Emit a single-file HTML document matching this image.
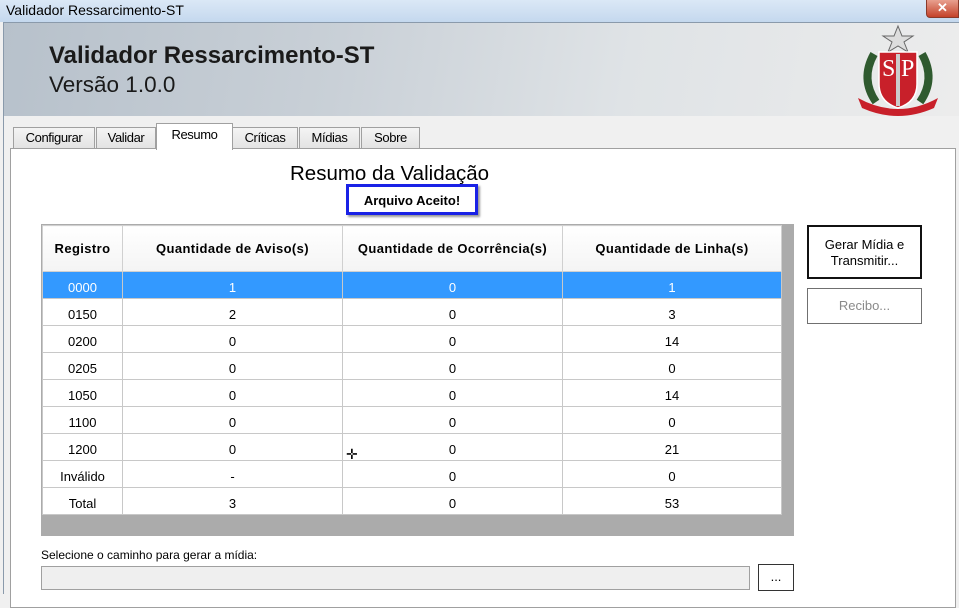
<!DOCTYPE html>
<html><head><meta charset="utf-8"><style>
*{margin:0;padding:0;box-sizing:border-box}
body{width:959px;height:594px;overflow:hidden;background:#f0f0f0;font-family:"Liberation Sans",sans-serif;position:relative;font-size:12px;color:#000}
.abs{position:absolute}
#titlebar{left:0;top:0;width:959px;height:22px;background:linear-gradient(#dbe8f6,#c4d8ee)}
#win{left:3px;top:22px;width:956px;height:572px;background:#f0f0f0;border-left:1px solid #8a9aab;border-top:1px solid #8a9aab}
#hdr{left:4px;top:23px;width:955px;height:93px;background:linear-gradient(100deg,#b7c1cb 0%,#c9d0d7 35%,#dfe3e6 65%,#ececec 100%)}
.tab{top:127px;height:22px;border:1px solid #a0a0a0;border-bottom:none;background:linear-gradient(#f4f4f4,#e2e2e2);font-size:13px;text-align:center;line-height:20px;letter-spacing:-0.4px}
#panel{left:10px;top:148px;width:946px;height:460px;background:#fff;border:1px solid #a0a0a0}
#grid{left:41px;top:224px;width:753px;height:312px;background:#ababab}
table{position:absolute;left:42px;top:225px;border-collapse:collapse;background:#fff;table-layout:fixed}
td{border:1px solid #c8c8c8;text-align:center;height:27px;font-size:13px;padding-top:4px}
th{border:1px solid #d0d0d0;height:46px;font-size:13px;font-weight:bold;background:linear-gradient(#fff,#f4f4f4);letter-spacing:0.4px}
tr.sel td{background:#3399ff;color:#fff}
.btn{background:#fff;border:1px solid #707070;text-align:center;font-size:13px}
</style></head><body>
<div class="abs" id="titlebar"></div>
<div class="abs" style="left:6px;top:2px;font-size:14px;color:#000">Validador Ressarcimento-ST</div>
<div class="abs" style="left:926px;top:0;width:33px;height:18px;background:linear-gradient(#e8a08f,#c4422a);border:1px solid #8a3a2a;border-top:none;border-radius:0 0 0 4px;color:#fff;font-weight:bold;text-align:center;font-size:13px;line-height:16px">✕</div>
<div class="abs" id="win"></div>
<div class="abs" id="hdr"></div>
<div class="abs" style="left:49px;top:42px;font-size:24px;font-weight:bold;color:#1a1a1a">Validador Ressarcimento-ST</div>
<div class="abs" style="left:49px;top:72px;font-size:22.5px;color:#1a1a1a">Versão 1.0.0</div>
<svg class="abs" style="left:852px;top:24px" width="92" height="92" viewBox="0 0 92 92">
<polygon points="46,2 50,12 61,12 52,18 56,28 46,22 36,28 40,18 31,12 42,12" fill="#ddd" stroke="#666"/>
<path d="M22,30 Q8,55 24,78" stroke="#2f5a2f" stroke-width="8" fill="none"/>
<path d="M70,30 Q84,55 68,78" stroke="#2f5a2f" stroke-width="8" fill="none"/>
<path d="M27,28 H65 V60 Q65,78 46,84 Q27,78 27,60 Z" fill="#c8202a" stroke="#fff" stroke-width="1.5"/>
<text x="30" y="52" font-family="Liberation Serif" font-size="24" fill="#fff">S</text>
<text x="49" y="52" font-family="Liberation Serif" font-size="24" fill="#fff">P</text>
<rect x="44" y="30" width="4" height="52" fill="#ccc"/>
<path d="M6,74 Q46,96 86,74 L82,84 Q46,100 10,84 Z" fill="#c8202a"/>
</svg>
<div class="abs tab" style="left:13px;width:82px">Configurar</div>
<div class="abs tab" style="left:96px;width:60px">Validar</div>
<div class="abs tab" style="left:232px;width:66px">Críticas</div>
<div class="abs tab" style="left:299px;width:61px">Mídias</div>
<div class="abs tab" style="left:361px;width:59px">Sobre</div>
<div class="abs" id="panel"></div>
<div class="abs" style="left:156px;top:123px;width:77px;height:27px;background:#fff;border:1px solid #a0a0a0;border-bottom:none;font-size:13px;text-align:center;line-height:22px;letter-spacing:-0.4px">Resumo</div>
<div class="abs" style="left:290px;top:162px;font-size:20.5px">Resumo da Validação</div>
<div class="abs" style="left:346px;top:184px;width:132px;height:31px;border:3px solid #1a22e6;font-size:13px;font-weight:bold;text-align:center;line-height:27px;box-shadow:2px 2px 2px #999">Arquivo Aceito!</div>
<div class="abs" id="grid"></div>
<table>
<tr><th style="width:80px">Registro</th><th style="width:220px">Quantidade de Aviso(s)</th><th style="width:220px">Quantidade de Ocorrência(s)</th><th style="width:219px">Quantidade de Linha(s)</th></tr>
<tr class="sel"><td>0000</td><td>1</td><td>0</td><td>1</td></tr>
<tr><td>0150</td><td>2</td><td>0</td><td>3</td></tr>
<tr><td>0200</td><td>0</td><td>0</td><td>14</td></tr>
<tr><td>0205</td><td>0</td><td>0</td><td>0</td></tr>
<tr><td>1050</td><td>0</td><td>0</td><td>14</td></tr>
<tr><td>1100</td><td>0</td><td>0</td><td>0</td></tr>
<tr><td>1200</td><td>0</td><td>0</td><td>21</td></tr>
<tr><td>Inválido</td><td>-</td><td>0</td><td>0</td></tr>
<tr><td>Total</td><td>3</td><td>0</td><td>53</td></tr>
</table>
<div class="abs" style="left:346px;top:446px;font-size:14px">✛</div>
<div class="abs btn" style="left:807px;top:225px;width:115px;height:54px;border:2px solid #111;padding-top:10px;line-height:16px">Gerar Mídia e<br>Transmitir...</div>
<div class="abs btn" style="left:807px;top:288px;width:115px;height:36px;color:#8a8a8a;line-height:34px">Recibo...</div>
<div class="abs" style="left:41px;top:548px;font-size:12px">Selecione o caminho para gerar a mídia:</div>
<div class="abs" style="left:41px;top:566px;width:709px;height:24px;background:#efefef;border:1px solid #a0a0a0"></div>
<div class="abs btn" style="left:758px;top:564px;width:36px;height:27px;border:1px solid #333;line-height:24px">...</div>
</body></html>
